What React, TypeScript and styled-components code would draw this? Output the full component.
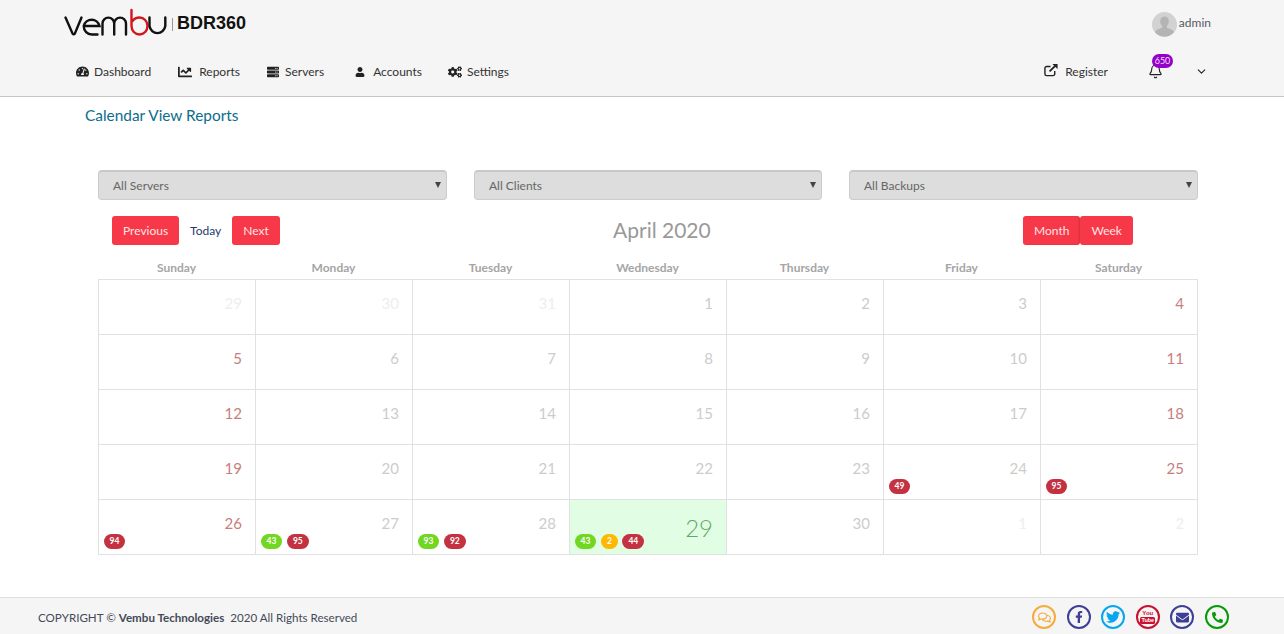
import React from 'react'
import styled, { createGlobalStyle } from 'styled-components'
import { FaTachometerAlt, FaChartLine, FaServer, FaUser, FaCogs, FaRegComments, FaFacebookF, FaTwitter, FaEnvelope, FaPhone } from 'react-icons/fa'
import { Bell, ChevronDown } from 'lucide-react'

const navItems = [
    { label: 'Dashboard', icon: <FaTachometerAlt size={13} />, box: 18, gap: 27 },
    { label: 'Reports', icon: <FaChartLine size={14} />, box: 21, gap: 27 },
    { label: 'Servers', icon: <FaServer size={12} />, box: 18, gap: 31 },
    { label: 'Accounts', icon: <FaUser size={10} />, box: 18, gap: 26 },
    { label: 'Settings', icon: <FaCogs size={14} />, box: 19, gap: 0 },
]

const weekdays = ['Sunday', 'Monday', 'Tuesday', 'Wednesday', 'Thursday', 'Friday', 'Saturday']

type BadgeTone = 'green' | 'amber' | 'red'
type DayKind = 'outside' | 'normal' | 'weekend' | 'today'
type Day = { n: number; kind: DayKind; badges?: [BadgeTone, number][] }

const days: Day[] = [
    { n: 29, kind: 'outside' }, { n: 30, kind: 'outside' }, { n: 31, kind: 'outside' },
    { n: 1, kind: 'normal' }, { n: 2, kind: 'normal' }, { n: 3, kind: 'normal' }, { n: 4, kind: 'weekend' },
    { n: 5, kind: 'weekend' }, { n: 6, kind: 'normal' }, { n: 7, kind: 'normal' }, { n: 8, kind: 'normal' },
    { n: 9, kind: 'normal' }, { n: 10, kind: 'normal' }, { n: 11, kind: 'weekend' },
    { n: 12, kind: 'weekend' }, { n: 13, kind: 'normal' }, { n: 14, kind: 'normal' }, { n: 15, kind: 'normal' },
    { n: 16, kind: 'normal' }, { n: 17, kind: 'normal' }, { n: 18, kind: 'weekend' },
    { n: 19, kind: 'weekend' }, { n: 20, kind: 'normal' }, { n: 21, kind: 'normal' }, { n: 22, kind: 'normal' },
    { n: 23, kind: 'normal' }, { n: 24, kind: 'normal', badges: [['red', 49]] }, { n: 25, kind: 'weekend', badges: [['red', 95]] },
    { n: 26, kind: 'weekend', badges: [['red', 94]] },
    { n: 27, kind: 'normal', badges: [['green', 43], ['red', 95]] },
    { n: 28, kind: 'normal', badges: [['green', 93], ['red', 92]] },
    { n: 29, kind: 'today', badges: [['green', 43], ['amber', 2], ['red', 44]] },
    { n: 30, kind: 'normal' }, { n: 1, kind: 'outside' }, { n: 2, kind: 'outside' },
]

function YoutubeIcon() {
    return <YoutubeMark><span>You</span><YoutubeBox>Tube</YoutubeBox></YoutubeMark>
}

const socials = [
    { color: '#f6ab3c', icon: <FaRegComments size={13} /> },
    { color: '#3d3f96', icon: <FaFacebookF size={12} /> },
    { color: '#06a7ee', icon: <FaTwitter size={14} /> },
    { color: '#c9102f', icon: <YoutubeIcon /> },
    { color: '#3d3f96', icon: <FaEnvelope size={13} /> },
    { color: '#079a07', icon: <FaPhone size={11} style={{ transform: 'scaleX(-1)' }} /> },
]

export default function App() {
    return (
        <>
            <GlobalStyle />
            <Header>
                <TopRow>
                    <Brand>
                        <svg width="103" height="29" viewBox="0 0 103 29" fill="none" strokeWidth="2.4" strokeLinecap="round">
                            <path stroke="#111" d="M1.5 9.5 L8.5 25.5 Q9.7 27.2 10.9 25.5 L17.5 9.5" />
                            <path stroke="#111" d="M20 18 H35.5 A8.2 8.5 0 0 0 19.7 18 A8.2 8.5 0 0 0 28 26.5 H33.5" />
                            <path stroke="#111" d="M38.5 26.5 V15.5 A5.8 5.8 0 0 1 50.2 15.5 V26.5 M50.2 15.5 A5.8 5.8 0 0 1 62 15.5 V26.5" />
                            <path stroke="#d3151c" d="M67.5 2 V18 A8 8.5 0 1 0 75.5 9.5 Q71 9.5 68.5 13" />
                            <path stroke="#111" d="M85.5 9.5 V18 A8 8.5 0 0 0 101.3 18 V9.5" />
                        </svg>
                        <BrandDivider />
                        <Product>BDR360</Product>
                    </Brand>
                    <UserBox>
                        <Avatar>
                            <svg width="25" height="25" viewBox="0 0 25 25">
                                <circle cx="12.5" cy="12.5" r="12.5" fill="#d2d2d2" />
                                <path fill="#b4b4b4" d="M12.5 4.5c2.6 0 4.3 2 4.3 4.8 0 2-1 3.7-2 4.6v1.5l5.4 2.6c1 .5 1.5 1.3 1.7 2.2A12.5 12.5 0 0 1 3 20.2c.2-.9.8-1.7 1.8-2.2l5.4-2.6v-1.5c-1-.9-2-2.6-2-4.6 0-2.8 1.7-4.8 4.3-4.8z" />
                            </svg>
                        </Avatar>
                        <UserName>admin</UserName>
                    </UserBox>
                </TopRow>
                <NavRow>
                    <NavList>
                        {navItems.map(item => (
                            <NavItem key={item.label} $gap={item.gap}>
                                <NavIcon $box={item.box}>{item.icon}</NavIcon>
                                {item.label}
                            </NavItem>
                        ))}
                    </NavList>
                    <NavTools>
                        <RegisterLink>
                            <RegisterIcon width="14" height="14" viewBox="0 0 15 14" fill="none" stroke="#222" strokeWidth="1.5">
                                <path d="M11.5 8v3.2a1.8 1.8 0 0 1-1.8 1.8H2.8A1.8 1.8 0 0 1 1 11.2V5a1.8 1.8 0 0 1 1.8-1.8H7" />
                                <path strokeWidth="2" d="M6 8.5 12 2.5" />
                                <path fill="#222" stroke="none" d="M9 0.5h5.500V6z" />
                            </RegisterIcon>
                            Register
                        </RegisterLink>
                        <BellBox>
                            <Bell size={15} strokeWidth={1.8} />
                            <BellCount>650</BellCount>
                        </BellBox>
                        <ChevronDown size={13} strokeWidth={2} />
                    </NavTools>
                </NavRow>
            </Header>
            <Main>
                <PageTitle>Calendar View Reports</PageTitle>
                <Content>
                    <Filters>
                        <FilterBox><FilterSelect><option>All Servers</option></FilterSelect></FilterBox>
                        <FilterBox><FilterSelect><option>All Clients</option></FilterSelect></FilterBox>
                        <FilterBox><FilterSelect><option>All Backups</option></FilterSelect></FilterBox>
                    </Filters>
                    <Toolbar>
                        <ButtonGroup>
                            <RedButton>Previous</RedButton>
                            <TodayLink>Today</TodayLink>
                            <RedButton>Next</RedButton>
                        </ButtonGroup>
                        <MonthTitle>April 2020</MonthTitle>
                        <ButtonGroup>
                            <RedButton $active>Month</RedButton>
                            <RedButton>Week</RedButton>
                        </ButtonGroup>
                    </Toolbar>
                    <WeekHeader>
                        {weekdays.map(d => <WeekDay key={d}>{d}</WeekDay>)}
                    </WeekHeader>
                    <Grid>
                        {days.map((d, i) => (
                            <Cell key={i} $today={d.kind === 'today'}>
                                <DayNumber $kind={d.kind}>{d.n}</DayNumber>
                                {d.badges && (
                                    <BadgeRow>
                                        {d.badges.map(([tone, value]) => (
                                            <Badge key={tone} $tone={tone}>{value}</Badge>
                                        ))}
                                    </BadgeRow>
                                )}
                            </Cell>
                        ))}
                    </Grid>
                </Content>
            </Main>
            <Footer>
                <Copyright>COPYRIGHT © <strong>Vembu Technologies</strong>&nbsp; 2020 All Rights Reserved</Copyright>
                <SocialList>
                    {socials.map((s, i) => <SocialIcon key={i} $color={s.color}>{s.icon}</SocialIcon>)}
                </SocialList>
            </Footer>
        </>
    )
}

const GlobalStyle = createGlobalStyle`
    html, body {
        margin: 0;
        padding: 0;
        background: #fff;
        font-family: Lato, "Liberation Sans", sans-serif;
    }
    * {
        box-sizing: border-box;
    }
`
const Header = styled.header`
    height: 97px;
    background: #f5f5f5;
    border-bottom: 1px solid #c4c4c4;
`
const TopRow = styled.div`
    height: 47px;
    display: flex;
    align-items: flex-start;
    justify-content: space-between;
    padding: 5px 73px 0 64px;
`
const Brand = styled.div`
    display: flex;
    align-items: center;
    height: 34px;
`
const BrandDivider = styled.span`
    width: 1px;
    height: 13px;
    margin: 4px 4px 0 5px;
    background: #999;
`
const Product = styled.span`
    font-family: "Liberation Sans", Arial, sans-serif;
    font-weight: 700;
    font-size: 18px;
    color: #111;
    margin-top: 2px;
`
const UserBox = styled.div`
    display: flex;
    align-items: center;
    gap: 2px;
    padding-top: 7px;
`
const Avatar = styled.span`
    display: flex;
    width: 25px;
    height: 25px;
`
const UserName = styled.span`
    font-size: 12px;
    color: #555a66;
    margin-top: -5px;
`
const NavRow = styled.nav`
    height: 49px;
    display: flex;
    align-items: center;
    justify-content: space-between;
    padding: 0 76px;
`
const NavList = styled.ul`
    display: flex;
    margin: 0;
    padding: 0;
    list-style: none;
`
const NavItem = styled.li<{ $gap: number }>`
    display: flex;
    align-items: center;
    font-size: 12px;
    color: #333;
    margin-right: ${p => p.$gap}px;
`
const NavIcon = styled.span<{ $box: number }>`
    display: flex;
    width: ${p => p.$box}px;
    color: #222;
`
const NavTools = styled.div`
    display: flex;
    align-items: center;
    color: #222;
`
const RegisterLink = styled.a`
    display: flex;
    align-items: center;
    gap: 7px;
    font-size: 12px;
    color: #333;
    margin-right: 40px;
`
const RegisterIcon = styled.svg`
    margin-top: -4px;
`
const BellBox = styled.span`
    position: relative;
    display: flex;
    margin-right: 32px;
`
const BellCount = styled.span`
    position: absolute;
    top: -10px;
    left: 4px;
    width: 21px;
    height: 14px;
    border-radius: 7px;
    background: #9400c9;
    color: #f2ddf8;
    font-size: 9px;
    line-height: 14px;
    text-align: center;
`
const Main = styled.main`
    height: 500px;
`
const PageTitle = styled.h1`
    margin: 0;
    padding: 8px 0 0 85px;
    font-size: 15.4px;
    line-height: 20px;
    font-weight: 400;
    color: #0d6d8c;
`
const Content = styled.section`
    width: 1100px;
    margin: 45px 0 0 98px;
`
const Filters = styled.div`
    display: grid;
    grid-template-columns: 349px 348px 349px;
    column-gap: 27px;
`
const FilterBox = styled.div`
    position: relative;

    &::after {
        content: '';
        position: absolute;
        top: 12px;
        right: 6px;
        border-left: 3px solid transparent;
        border-right: 3px solid transparent;
        border-top: 6px solid #444;
        pointer-events: none;
    }
`
const FilterSelect = styled.select`
    display: block;
    width: 100%;
    height: 30px;
    padding: 0 0 0 14px;
    appearance: none;
    border: 1px solid #ccc;
    border-top: 2px solid #c8c8c8;
    border-radius: 4px;
    background-color: #dddddd;
    color: #666;
    font-family: Lato, sans-serif;
    font-size: 12px;
`
const Toolbar = styled.div`
    display: flex;
    align-items: center;
    justify-content: space-between;
    height: 29px;
    margin-top: 16px;
    padding: 0 65px 0 14px;
`
const ButtonGroup = styled.div`
    display: flex;
    align-items: center;
`
const RedButton = styled.button<{ $active?: boolean }>`
    height: 29px;
    padding: 0 11px;
    border: 0;
    border-radius: 3px;
    background: #f73848;
    box-shadow: ${p => (p.$active ? 'inset -1px 0 2px rgba(0, 0, 0, 0.15)' : 'none')};
    color: #ffe3e5;
    font-family: Lato, sans-serif;
    font-size: 12px;
`
const TodayLink = styled.a`
    width: 53px;
    text-align: center;
    font-size: 12px;
    color: #1d3c6e;
`
const MonthTitle = styled.h2`
    margin: -2px 0 0 21px;
    font-size: 21px;
    font-weight: 400;
    color: #999;
`
const WeekHeader = styled.div`
    display: grid;
    grid-template-columns: repeat(7, 157px);
    margin-top: 16px;
    height: 18px;
`
const WeekDay = styled.div`
    text-align: center;
    font-size: 12px;
    line-height: 14px;
    font-weight: 700;
    color: #a5a5a5;
`
const Grid = styled.div`
    display: grid;
    grid-template-columns: repeat(7, 157px);
    grid-auto-rows: 55px;
    width: 1100px;
    border-top: 1px solid #e1e1e1;
    border-left: 1px solid #e1e1e1;
`
const Cell = styled.div<{ $today: boolean }>`
    position: relative;
    padding: 12px 13px 0 0;
    border-right: 1px solid #e1e1e1;
    border-bottom: 1px solid #e1e1e1;
    background: ${p => (p.$today ? '#e1fde4' : '#fff')};
    text-align: right;
`
const dayColors: Record<DayKind, string> = {
    outside: '#eeeeee',
    normal: '#cccccc',
    weekend: '#c87d7e',
    today: '#5fa866',
}
const DayNumber = styled.div<{ $kind: DayKind }>`
    font-size: ${p => (p.$kind === 'today' ? '24px' : '15px')};
    font-weight: ${p => (p.$kind === 'today' ? 300 : 400)};
    line-height: ${p => (p.$kind === 'today' ? '34px' : '22px')};
    margin: ${p => (p.$kind === 'today' ? '-1px 0 0' : '0')};
    color: ${p => dayColors[p.$kind]};
`
const BadgeRow = styled.div`
    position: absolute;
    left: 4.5px;
    bottom: 5px;
    display: flex;
    gap: 4.5px;
`
const badgeColors: Record<BadgeTone, string> = {
    green: '#72d721',
    amber: '#ffb900',
    red: '#c43242',
}
const Badge = styled.span<{ $tone: BadgeTone }>`
    min-width: 17px;
    height: 15px;
    padding: 0 6px;
    border-radius: 8px;
    background: ${p => badgeColors[p.$tone]};
    color: #fff;
    font-size: 8.5px;
    font-weight: 700;
    line-height: 15px;
    text-align: center;
`
const Footer = styled.footer`
    height: 37px;
    display: flex;
    align-items: center;
    justify-content: space-between;
    padding: 2px 55px 0 38px;
    background: #f5f5f5;
    border-top: 1px solid #dedede;
`
const Copyright = styled.div`
    font-size: 11.6px;
    color: #444a57;
`
const SocialList = styled.div`
    display: flex;
    gap: 10.6px;
`
const SocialIcon = styled.span<{ $color: string }>`
    display: flex;
    align-items: center;
    justify-content: center;
    width: 24px;
    height: 24px;
    border: 2px solid ${p => p.$color};
    border-radius: 50%;
    color: ${p => p.$color};
`
const YoutubeMark = styled.span`
    display: flex;
    flex-direction: column;
    align-items: center;
    font-family: "Liberation Sans", sans-serif;
    font-size: 6px;
    font-weight: 700;
    line-height: 6px;
`
const YoutubeBox = styled.span`
    margin-top: 1px;
    padding: 0 1px;
    border-radius: 1.5px;
    background: #c9102f;
    color: #fff;
    font-size: 5.5px;
    line-height: 7px;
`
